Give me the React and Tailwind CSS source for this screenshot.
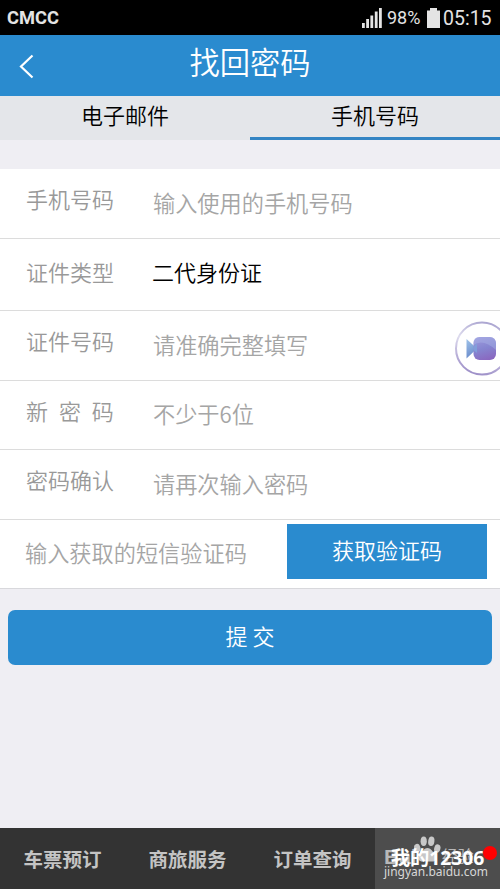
import React from 'react';

const tabs = [
  { label: '电子邮件', className: 'pb-[8px]' },
  { label: '手机号码', className: 'pb-[5px] border-b-[3px] border-[#3485c4]' },
];

const rows = [
  { label: '手机号码', placeholder: '输入使用的手机号码', height: 'h-[70px]' },
  { label: '证件类型', value: '二代身份证', height: 'h-[72px]' },
  { label: '证件号码', placeholder: '请准确完整填写', height: 'h-[70px]' },
  { label: '新 密 码', placeholder: '不少于6位', height: 'h-[69px]', spacing: '[word-spacing:6px]' },
  { label: '密码确认', placeholder: '请再次输入密码', height: 'h-[70px]' },
];

const navItems = ['车票预订', '商旅服务', '订单查询'];

const StatusBar = () => (
  <div className="h-[35px] shrink-0 bg-black flex items-center justify-between pl-[7px] pr-[10px] text-[#e4e4e4] font-[Roboto,'Noto_Sans_CJK_SC',sans-serif]">
    <span className="text-[18.3px] leading-[36px] font-bold">CMCC</span>
    <div className="flex items-center h-[35px]">
      <svg width="20" height="20" viewBox="0 0 20 20" fill="#e4e4e4" className="mr-[5px]">
        <rect x="0" y="15" width="2.8" height="5" />
        <rect x="4.2" y="11" width="2.8" height="9" />
        <rect x="8.4" y="7.5" width="2.8" height="12.5" />
        <rect x="12.8" y="3.5" width="2.8" height="16.5" />
        <rect x="17" y="0" width="2.8" height="20" />
      </svg>
      <span className="text-[18px] w-[40px] whitespace-nowrap">98%</span>
      <svg width="13" height="20" viewBox="0 0 13 20" fill="#e4e4e4" className="mr-[3px]">
        <path d="M3 0h7v2.5h3V20H0V2.5h3z" />
      </svg>
      <span className="text-[19.5px] leading-[38px] mt-[2px] w-[47px] whitespace-nowrap">05:15</span>
    </div>
  </div>
);

const Header = () => (
  <div className="h-[61px] shrink-0 bg-[#2a8bcf] grid grid-cols-[1fr_auto_1fr] items-center text-white">
    <svg width="15" height="25" viewBox="0 0 15 25" fill="none" stroke="currentColor" strokeWidth="2.2" className="ml-[19px] mt-[1px]">
      <path d="M13.5 1.5L2 12.5L13.5 23.5" />
    </svg>
    <h1 className="text-[30.3px] leading-[40px] font-[350] mb-[9px]">找回密码</h1>
  </div>
);

const FloatingVideo = () => (
  <div className="absolute right-0 top-[321px] w-[45px] h-[56px] overflow-hidden">
    <svg width="56" height="56" viewBox="0 0 56 56">
      <defs>
        <linearGradient id="ring" x1="0.7" y1="0" x2="0.45" y2="1">
          <stop offset="0" stopColor="#a8a2cf" />
          <stop offset="0.4" stopColor="#dedcee" />
          <stop offset="1" stopColor="#9f91c9" />
        </linearGradient>
        <linearGradient id="camera" x1="0.3" y1="0" x2="0.6" y2="1">
          <stop offset="0" stopColor="#9c98dc" />
          <stop offset="0.5" stopColor="#8585d0" />
          <stop offset="1" stopColor="#8a68c0" />
        </linearGradient>
        <linearGradient id="lens" x1="0" y1="0" x2="0.3" y2="1">
          <stop offset="0" stopColor="#a0c4ea" />
          <stop offset="1" stopColor="#6a8bcb" />
        </linearGradient>
      </defs>
      <circle cx="27" cy="27.5" r="26" fill="#fff" stroke="url(#ring)" strokeWidth="2" />
      <path d="M11.5 18L22 27.5L11.5 37.5z" fill="url(#lens)" />
      <rect x="18.5" y="16" width="22.5" height="23" rx="6" fill="url(#camera)" />
      <path d="M18.5 24Q28 17 41 29V22Q40 16 35 16H24Q18.5 16 18.5 22z" fill="#a9b3e6" opacity="0.45" />
      <path d="M18.5 26L22 22V32L18.5 29z" fill="#7fa2dc" opacity="0.8" />
    </svg>
  </div>
);

const Watermark = () => (
  <div className="absolute inset-0 text-[#b8b8b8] font-['Liberation_Sans','Noto_Sans_CJK_SC',sans-serif]">
    <div className="absolute left-[9px] top-[18px] text-[21px] leading-[22px] font-bold whitespace-nowrap flex">
      <span>Bai</span>
      <span className="ml-[25px] text-[16px] font-normal">经验</span>
    </div>
    <svg width="27" height="26" viewBox="0 0 27 26" fill="#c8c8c8" className="absolute left-[39px] top-[8px]">
      <ellipse cx="3.3" cy="12" rx="3.1" ry="4.2" transform="rotate(-15 3.3 12)" />
      <ellipse cx="9.7" cy="5.2" rx="3.1" ry="4.8" />
      <ellipse cx="17.3" cy="5.2" rx="3.1" ry="4.8" transform="rotate(8 17.3 5.2)" />
      <ellipse cx="23.3" cy="12.5" rx="3.1" ry="4.2" transform="rotate(15 23.3 12.5)" />
      <path d="M13.5 12c4 0 5 4 8 7c3 4 0 7-4 6.5h-8c-4 .5-7-2.5-4-6.5c3-3 4-7 8-7z" />
    </svg>
  </div>
);

const App = () => {
  return (
    <div className="relative w-[500px] h-[889px] overflow-hidden flex flex-col bg-[#efeef3] font-['Noto_Sans_CJK_SC',sans-serif]">
      <StatusBar />
      <Header />

      {/* Tabs */}
      <div className="h-[44px] shrink-0 grid grid-cols-2 bg-[#e4e6ea] text-[22px] font-[350] text-black">
        {tabs.map((tab) => (
          <button key={tab.label} className={`flex items-center justify-center leading-[36px] ${tab.className}`}>
            {tab.label}
          </button>
        ))}
      </div>

      {/* Form */}
      <div className="mt-[29px] bg-white text-[22px] leading-[30px] font-[350] text-[#999]">
        {rows.map((row) => (
          <div key={row.label} className={`${row.height} flex items-center border-b border-[#dcdcdc] pl-[26px] ${row.value ? 'pb-[8px]' : 'pb-[4px]'}`}>
            <span className={`whitespace-pre ${row.value ? 'w-[126px]' : 'w-[127px] mb-[7px]'} ${row.spacing || ''}`}>{row.label}</span>
            {row.value ? (
              <span className="text-black">{row.value}</span>
            ) : (
              <span className="text-[22.2px] text-[#a5a5a5]">{row.placeholder}</span>
            )}
          </div>
        ))}
        <div className="h-[69px] flex items-center justify-between border-b border-[#d8d8dc] pl-[25px] pr-[13px]">
          <span className="text-[22.2px] text-[#a5a5a5] mb-[4px]">输入获取的短信验证码</span>
          <button className="w-[200px] h-[55px] mb-[5px] pb-[6px] bg-[#2a8bcf] text-white">获取验证码</button>
        </div>
      </div>

      <button className="mx-[8px] mt-[21px] h-[55px] shrink-0 pb-[4px] rounded-[7px] bg-[#2a8bcf] text-white text-[22px] font-[350]">
        提 交
      </button>

      {/* Bottom navigation */}
      <div className="mt-auto h-[61px] shrink-0 grid grid-cols-4 bg-[#333] text-[19.5px] font-bold text-[#c4c4c4]">
        {navItems.map((item) => (
          <div key={item} className="flex items-center justify-center">{item}</div>
        ))}
        <div className="relative bg-[#4d4d4d] flex items-center justify-center text-white">
          <Watermark />
          <span className="relative whitespace-nowrap font-['Noto_Sans','Noto_Sans_CJK_SC',sans-serif] text-[19.3px]">我的12306</span>
          <span className="absolute left-[9px] bottom-[9px] text-[12px] leading-[16px] font-normal text-[#d8d8d8] font-['Noto_Sans',sans-serif]">jingyan.baidu.com</span>
          <span className="absolute right-[3px] top-[18px] w-[14px] h-[14px] rounded-full bg-[#f00]" />
        </div>
      </div>

      <FloatingVideo />
    </div>
  );
};

export default App;
